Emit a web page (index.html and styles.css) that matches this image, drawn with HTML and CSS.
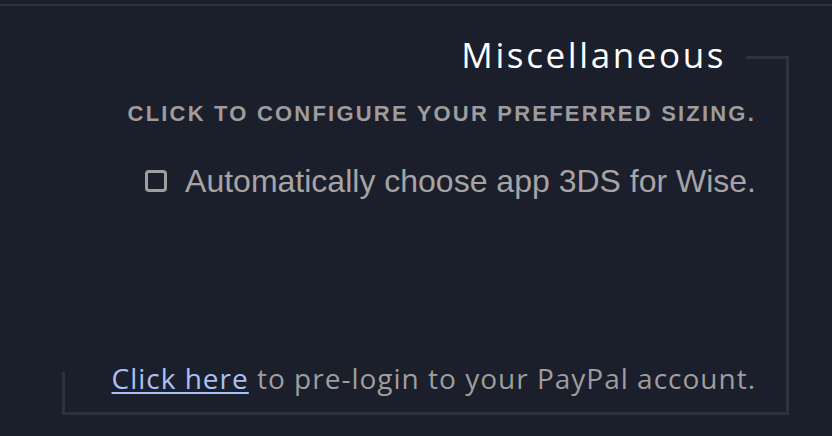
FILE: index.html
```html
<!DOCTYPE html>
<html>
<head>
<meta charset="utf-8">
<link rel="stylesheet" href="styles.css">
</head>
<body>
<div class="topline"></div>
<section class="box">
  <div class="head">
    <h2 class="title">Miscellaneous</h2>
    <span class="rule"></span>
  </div>
  <p class="caps">Click to configure your preferred sizing.</p>
  <label class="check">
    <span class="checkbox"></span>
    <span class="check-text">Automatically choose app 3DS for Wise.</span>
  </label>
  <div class="foot">
    <span class="stub"></span>
    <p class="login"><a href="#" class="link">Click here</a> to pre-login to your PayPal account.</p>
  </div>
</section>
</body>
</html>
```
FILE: styles.css
```css
html, body {
  margin: 0;
  padding: 0;
  background: #1b1e2b;
  width: 832px;
  height: 436px;
  overflow: hidden;
}
body {
  font-family: "Liberation Sans", Arial, sans-serif;
}
.topline {
  margin-top: 4px;
  height: 2px;
  background: #2d303f;
}
.box {
  box-sizing: border-box;
  margin: 50px 0 0 62px;
  width: 727px;
  height: 359px;
  border-right: 3px solid #2e3142;
  border-bottom: 3px solid #2e3142;
  padding-right: 30px;
  display: flex;
  flex-direction: column;
  align-items: flex-end;
}
.head {
  display: flex;
  align-items: flex-start;
  margin-top: -21px;
  margin-right: -30px;
}
.title {
  margin: 0 20px 0 0;
  font-family: "Open Sans", sans-serif;
  font-weight: 500;
  font-size: 35px;
  line-height: 40px;
  letter-spacing: 2.6px;
  color: #ffffff;
}
.rule {
  width: 40px;
  height: 3px;
  margin-top: 21px;
  background: #2e3142;
}
.caps {
  margin: 26px 0 0 0;
  font-weight: 700;
  font-size: 22px;
  line-height: 26px;
  letter-spacing: 2.2px;
  text-transform: uppercase;
  color: #9e9c9c;
}
.check {
  margin-top: 35px;
  display: flex;
  align-items: center;
  gap: 18px;
}
.checkbox {
  box-sizing: border-box;
  width: 22px;
  height: 22px;
  border: 3px solid #a09e9e;
  border-radius: 4px;
}
.check-text {
  font-size: 32px;
  line-height: 38px;
  color: #a6a4a4;
}
.foot {
  margin-top: auto;
  align-self: stretch;
  display: flex;
  justify-content: space-between;
  align-items: flex-end;
}
.stub {
  width: 3px;
  height: 40px;
  background: #2e3142;
}
.login {
  margin: 0 0 17px 0;
  font-family: "Open Sans", sans-serif;
  font-size: 28px;
  line-height: 34px;
  letter-spacing: 1px;
  color: #9f9d9d;
}
.link {
  color: #a9c1f7;
  text-decoration: underline;
  text-underline-offset: 3px;
}
```
